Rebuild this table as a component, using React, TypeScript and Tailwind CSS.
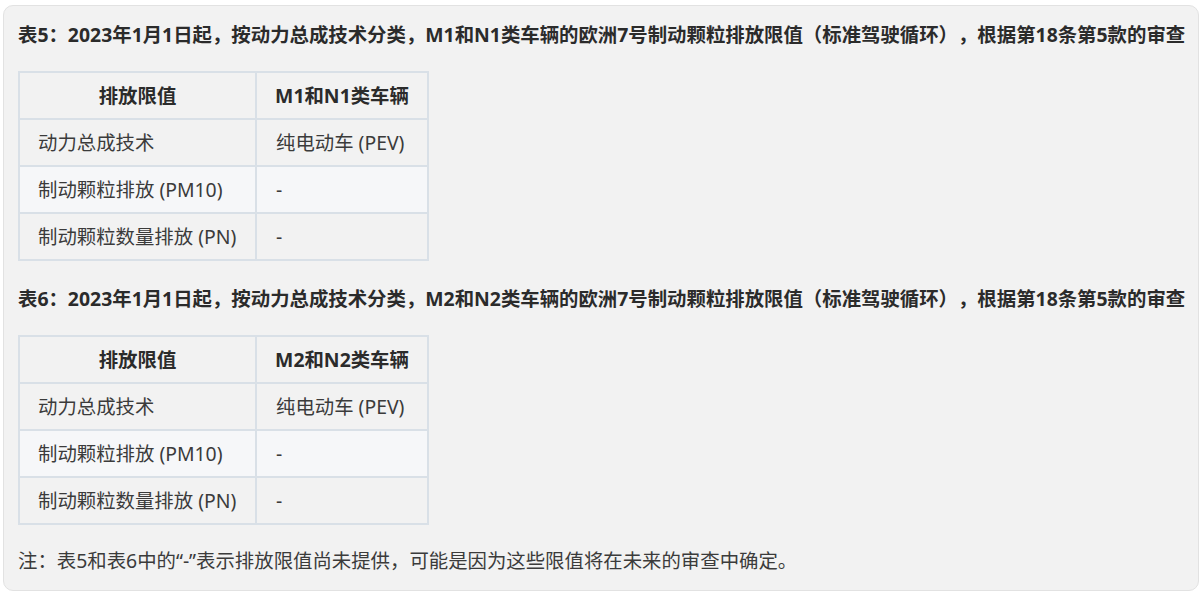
import React from "react";

const TABLES = [
  {
    title:
      "表5：2023年1月1日起，按动力总成技术分类，M1和N1类车辆的欧洲7号制动颗粒排放限值（标准驾驶循环），根据第18条第5款的审查",
    vehicle: "M1和N1类车辆",
  },
  {
    title:
      "表6：2023年1月1日起，按动力总成技术分类，M2和N2类车辆的欧洲7号制动颗粒排放限值（标准驾驶循环），根据第18条第5款的审查",
    vehicle: "M2和N2类车辆",
  },
];

const ROWS = [
  { label: "动力总成技术", value: "纯电动车 (PEV)", bg: "bg-[#f2f2f2]" },
  { label: "制动颗粒排放 (PM10)", value: "-", bg: "bg-[#f6f7f9]" },
  { label: "制动颗粒数量排放 (PN)", value: "-", bg: "bg-[#f2f2f2]" },
];

function EmissionTable({ vehicle }: { vehicle: string }) {
  return (
    <table className="border-collapse border-2 border-[#d9e0e7] text-[19.4px] text-[#3b3b3b]">
      <thead>
        <tr className="bg-[#f2f2f2] h-[47px]">
          <th className="w-[237px] border-2 border-[#d9e0e7] font-bold text-center text-[#2b2b2b]">排放限值</th>
          <th className="w-[172px] border-2 border-[#d9e0e7] font-bold text-center text-[#2b2b2b]">{vehicle}</th>
        </tr>
      </thead>
      <tbody>
        {ROWS.map((r) => (
          <tr key={r.label} className={`${r.bg} h-[47px]`}>
            <td className="border-2 border-[#d9e0e7] pl-[18px] whitespace-nowrap">{r.label}</td>
            <td className="border-2 border-[#d9e0e7] pl-[19px] whitespace-nowrap">{r.value}</td>
          </tr>
        ))}
      </tbody>
    </table>
  );
}

export default function App() {
  return (
    <div
      className="bg-white w-[1200px] h-[594px] pt-[5px] pl-[3px] pr-[1px] [text-spacing-trim:space-all]"
      style={{ fontFamily: '"Noto Sans", "Noto Sans CJK SC", sans-serif' }}
    >
      <div className="bg-[#f2f2f2] border border-[#e2e2e2] rounded-[10px] h-[586px] pl-[14px] pt-[17px]">
        {TABLES.map((t, i) => (
          <div key={i} className="mb-[26px]">
            <h2 className="text-[19.4px] leading-[24px] font-bold text-[#2b2b2b] mb-[24px] whitespace-nowrap">
              {t.title}
            </h2>
            <EmissionTable vehicle={t.vehicle} />
          </div>
        ))}
        <p className="text-[19.4px] leading-[24px] text-[#3b3b3b] -mt-[2px] whitespace-nowrap">
          注：表5和表6中的“-”表示排放限值尚未提供，可能是因为这些限值将在未来的审查中确定。
        </p>
      </div>
    </div>
  );
}
